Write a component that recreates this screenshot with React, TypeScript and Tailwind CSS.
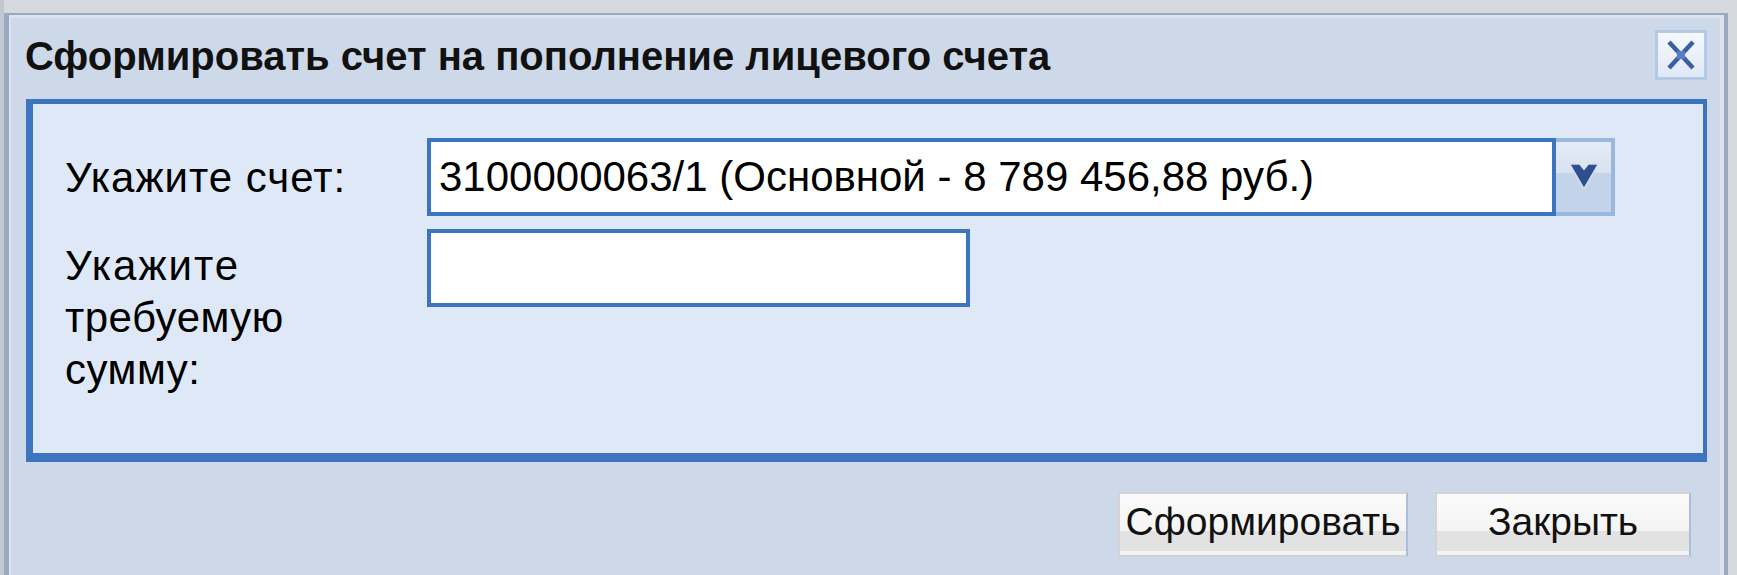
import React from "react";

function CloseButton() {
  return (
    <div className="mt-[12px] w-[52px] h-[50px] border-[3px] border-[#b3c9e8] bg-[linear-gradient(to_bottom,#f4f8fd,#dfe9f6)] flex items-center justify-center">
      <svg width="30" height="32" viewBox="0 0 30 32">
        <line x1="3" y1="3" x2="27" y2="29" stroke="#3a5ea3" strokeWidth="4.5" />
        <line x1="27" y1="3" x2="3" y2="29" stroke="#3a5ea3" strokeWidth="4.5" />
        <rect x="11" y="12" width="8" height="8" fill="#5a7cc0" />
      </svg>
    </div>
  );
}

function Combo() {
  return (
    <div className="flex h-[78px]">
      <div className="w-[1129px] h-full border-4 border-[#3d74bf] bg-white flex items-center pl-[8px]">
        <span className="text-[42px] leading-none text-black whitespace-nowrap">
          3100000063/1 (Основной - 8 789 456,88 руб.)
        </span>
      </div>
      <div className="w-[59px] h-full border-t-4 border-r-4 border-b-4 border-[#9ab7de] bg-[linear-gradient(to_bottom,#e3ebf6_0%,#d8e3f1_45%,#c3d4ea_45%,#c3d4ea_100%)] flex items-center justify-center">
        <svg width="32" height="28" viewBox="0 0 34 30">
          <polygon points="0,0 12,0 17,6 22,0 34,0 17,30" fill="#d6dde8" />
          <polygon points="3,2 12,2 17,8 22,2 31,2 17,26" fill="#2d4f8f" />
        </svg>
      </div>
    </div>
  );
}

function Btn({ w, children }: { w: string; children: React.ReactNode }) {
  return (
    <div
      className={`${w} h-[65px] border-2 border-[#d3d3d3] border-r-[#a9bfdd] bg-[linear-gradient(to_bottom,#fbfbfb_0%,#f4f4f4_60%,#e2e2e2_60%,#e2e2e2_93%,#f3f3f3_93%)] flex items-center justify-center pb-[5px] text-[39px] text-[#111] whitespace-nowrap`}
    >
      {children}
    </div>
  );
}

export default function App() {
  return (
    <div className="w-[1737px] h-[575px] overflow-hidden bg-[#d6dae0] flex font-['Liberation_Sans',Arial,sans-serif]">
      <div className="w-[4px] h-full bg-[#c2c8d0]" />
      <div className="mt-[13px] w-[1724px] h-[562px] border-t-2 border-l-[5px] border-r-4 border-[#98a9c0] bg-[#cdd9e8]">
        <div className="h-full border-t-[3px] border-l-2 border-r-4 border-[#dce4ee] flex flex-col pl-[15px] pr-[13px]">
          <div className="h-[81px] flex justify-between items-start">
            <div className="-ml-px pt-[18px] text-[40px] leading-[40px] font-bold text-[#111] whitespace-nowrap">
              Сформировать счет на пополнение лицевого счета
            </div>
            <CloseButton />
          </div>
          <div className="h-[363px] border-t-[5px] border-l-[7px] border-r-4 border-b-[9px] border-[#3d74bf] bg-[#dfe8f6] pt-[34px] pl-[32px]">
            <div className="flex items-center h-[78px]">
              <div className="w-[362px] text-[42px] tracking-[1px] text-black whitespace-nowrap">Укажите счет:</div>
              <Combo />
            </div>
            <div className="flex mt-[13px]">
              <div className="w-[362px] pt-[11px] text-[42px] tracking-[0.5px] leading-[52px] text-black">
                <span className="tracking-[2px]">Укажите</span>
                <br />
                требуемую
                <br />
                сумму:
              </div>
              <div className="w-[543px] h-[78px] border-4 border-[#3d74bf] bg-white" />
            </div>
          </div>
          <div className="flex justify-end gap-[27px] pr-[16px] mt-[30px]">
            <Btn w="w-[290px]">Сформировать</Btn>
            <Btn w="w-[256px]">Закрыть</Btn>
          </div>
        </div>
      </div>
    </div>
  );
}
